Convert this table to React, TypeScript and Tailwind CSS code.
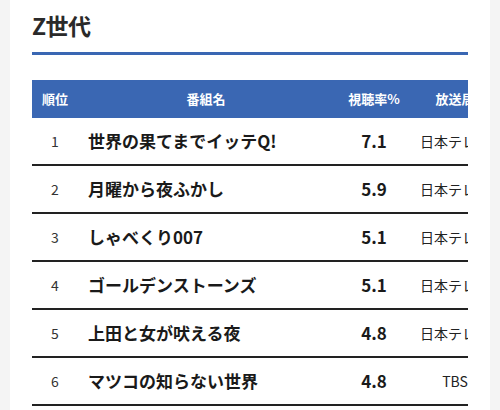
import React from "react";

const rows = [
  { rank: 1, title: "世界の果てまでイッテQ!", rate: "7.1", station: "日本テレビ" },
  { rank: 2, title: "月曜から夜ふかし", rate: "5.9", station: "日本テレビ" },
  { rank: 3, title: "しゃべくり007", rate: "5.1", station: "日本テレビ" },
  { rank: 4, title: "ゴールデンストーンズ", rate: "5.1", station: "日本テレビ" },
  { rank: 5, title: "上田と女が吠える夜", rate: "4.8", station: "日本テレビ" },
  { rank: 6, title: "マツコの知らない世界", rate: "4.8", station: "TBS" },
];

export default function App() {
  return (
    <div
      className="w-[500px] h-[410px] bg-[#f4f4f4] flex justify-center overflow-hidden"
      style={{ fontFamily: '"Noto Sans CJK JP", "Noto Sans", sans-serif' }}
    >
      <div className="w-[480px] bg-white px-[22px] pt-[9px]">
        <h2 className="text-[23px] font-bold text-[#2a2a2a] leading-[32px] tracking-[-0.5px]">Z世代</h2>
        <div className="mt-[11px] h-[3px] bg-[#3a67b3]" />
        <div className="mt-[25px] w-[436px] overflow-hidden">
          <div className="w-[464px]">
            <div className="flex h-[38px] items-center bg-[#3a67b3] text-white text-[13px] font-bold">
              <div className="w-[46px] text-center">順位</div>
              <div className="w-[256px] text-center">番組名</div>
              <div className="w-[80px] text-center">視聴率%</div>
              <div className="w-[82px] text-center">放送局</div>
            </div>
            {rows.map((r) => (
              <div
                key={r.rank}
                className="flex h-[48px] items-center border-b-2 border-[#222]"
              >
                <div className="w-[46px] text-center text-[14px] text-[#333]">{r.rank}</div>
                <div className="w-[256px] pl-[10px] text-[17px] font-bold text-[#1a1a1a] whitespace-nowrap">
                  {r.title}
                </div>
                <div className="w-[80px] text-center text-[17px] font-bold text-[#1a1a1a]">{r.rate}</div>
                <div className="w-[82px] text-center text-[14px] text-[#222] whitespace-nowrap">{r.station}</div>
              </div>
            ))}
          </div>
        </div>
      </div>
    </div>
  );
}
